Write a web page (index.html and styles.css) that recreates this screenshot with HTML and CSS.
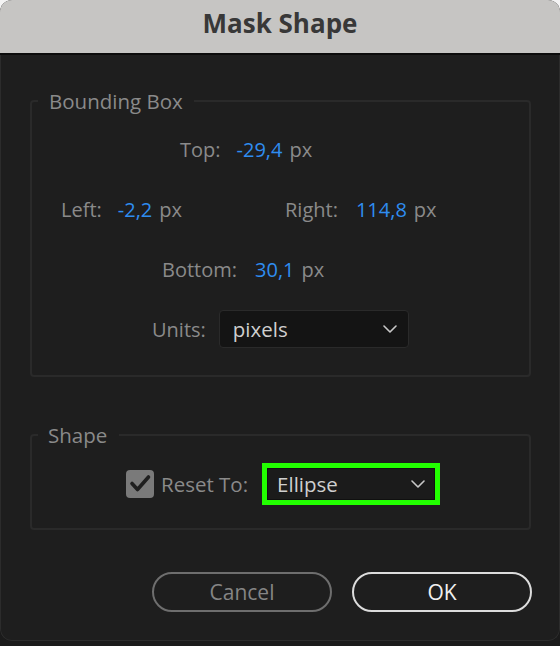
FILE: index.html
```html
<!DOCTYPE html>
<html lang="en">
<head>
<meta charset="utf-8">
<title>Mask Shape</title>
<link rel="stylesheet" href="styles.css">
</head>
<body>
<div class="window">
  <div class="titlebar">Mask Shape</div>
  <div class="content">
    <fieldset class="group bbox">
      <legend>Bounding Box</legend>
      <div class="row row-top">
        <span class="label">Top:</span>
        <span class="value">-29,4</span><span class="unit">px</span>
      </div>
      <div class="row row-lr">
        <div class="pair pair-left">
          <span class="label">Left:</span>
          <span class="value">-2,2</span><span class="unit">px</span>
        </div>
        <div class="pair pair-right">
          <span class="label">Right:</span>
          <span class="value">114,8</span><span class="unit">px</span>
        </div>
      </div>
      <div class="row row-bottom">
        <span class="label">Bottom:</span>
        <span class="value">30,1</span><span class="unit">px</span>
      </div>
      <div class="row row-units">
        <span class="label">Units:</span>
        <div class="select units-select">
          <span class="select-text">pixels</span>
          <svg class="chevron" width="14" height="8" viewBox="0 0 14 8"><polyline points="1,1 7,7 13,1" fill="none" stroke="#c8c8c8" stroke-width="1.6" stroke-linecap="round" stroke-linejoin="round"/></svg>
        </div>
      </div>
    </fieldset>

    <fieldset class="group shape">
      <legend>Shape</legend>
      <div class="row row-shape">
        <span class="checkbox">
          <svg width="28" height="28" viewBox="0 0 28 28"><polyline points="6,13.5 11.5,19.5 22.5,7" fill="none" stroke="#1f1f1f" stroke-width="3.6" stroke-linecap="round" stroke-linejoin="round"/></svg>
        </span>
        <span class="label reset-label">Reset To:</span>
        <div class="select shape-select">
          <span class="select-text">Ellipse</span>
          <svg class="chevron" width="14" height="8" viewBox="0 0 14 8"><polyline points="1,1 7,7 13,1" fill="none" stroke="#c8c8c8" stroke-width="1.6" stroke-linecap="round" stroke-linejoin="round"/></svg>
        </div>
      </div>
    </fieldset>

    <div class="buttons">
      <button class="btn btn-cancel">Cancel</button>
      <button class="btn btn-ok">OK</button>
    </div>
  </div>
</div>
</body>
</html>
```
FILE: styles.css
```css
html, body {
  margin: 0;
  padding: 0;
}
body {
  width: 560px;
  height: 646px;
  background: linear-gradient(to bottom, #f4f4f4 0, #f4f4f4 320px, #1b1b1b 320px, #1b1b1b 100%);
  font-family: "Open Sans", "Noto Sans", sans-serif;
  overflow: hidden;
}
.window {
  width: 560px;
  height: 641px;
  border-radius: 12px;
  overflow: hidden;
  background: #1e1e1e;
  display: flex;
  flex-direction: column;
}
.titlebar {
  height: 53px;
  background: #c6c5c3;
  border-bottom: 2px solid #0c0c0c;
  text-align: center;
  font-size: 26px;
  font-weight: 700;
  color: #383838;
  line-height: 47px;
}
.content {
  flex: 1;
  display: flex;
  flex-direction: column;
  border: 1px solid #2c2c2c;
  border-top: none;
  border-radius: 0 0 12px 12px;
}
.group {
  margin: 0 28px 0 29px;
  padding: 0;
  border: 2px solid #2a2a2a;
  border-radius: 4px;
  min-width: 0;
}
.group legend {
  margin-left: 6px;
  padding: 0 11px;
  font-size: 20.5px;
  line-height: 24px;
  color: #8a8a8a;
}
.bbox {
  margin-top: 34px;
  padding: 6px 0 16px;
}
.shape {
  margin-top: 46px;
  padding: 16px 0 23px;
}
.shape legend {
  padding: 0 12px 0 10px;
}
.row {
  display: flex;
  align-items: center;
  height: 60px;
  font-size: 20px;
  color: #8a8a8a;
  white-space: nowrap;
}
.label {
  color: #8a8a8a;
  margin-right: 16px;
}
.value {
  color: #2f8df0;
}
.unit {
  margin-left: 7px;
  color: #8a8a8a;
}
.row-top { padding-left: 148px; }
.row-lr {
  padding-left: 29px;
  display: grid;
  grid-template-columns: 224px auto;
  align-items: center;
}
.row-lr .pair {
  display: flex;
  align-items: center;
}
.pair-left .label { margin-right: 16px; }
.pair-right .label { margin-right: 18px; }
.row-bottom { padding-left: 130px; }
.row-bottom .label { margin-right: 18px; }
.row-units { padding-left: 120px; }
.row-units .label { margin-right: 13px; }

.select {
  display: flex;
  align-items: center;
  justify-content: space-between;
  box-sizing: border-box;
  color: #cfcfcf;
  font-size: 20.5px;
}
.units-select {
  width: 190px;
  height: 38px;
  background: #141414;
  border: 1px solid #2a2a2a;
  border-radius: 4px;
  padding: 0 11px 0 13px;
}
.row-shape {
  height: 42px;
  padding-left: 94px;
}
.checkbox {
  width: 28px;
  height: 28px;
  background: #7a7a7a;
  border-radius: 4px;
  display: flex;
  margin-right: 7px;
}
.reset-label {
  font-size: 20.5px;
  margin-right: 14px;
}
.shape-select {
  width: 178px;
  height: 42px;
  border: 5px solid #22ff00;
  background: #1b1b1b;
  box-shadow: inset 0 0 0 1px #101010;
  padding: 0 10px 0 10px;
}
.buttons {
  display: flex;
  justify-content: flex-end;
  gap: 20px;
  margin-top: 42px;
  padding-right: 27px;
}
.btn {
  width: 180px;
  height: 40px;
  border-radius: 20px;
  background: transparent;
  font-family: "Open Sans", "Noto Sans", sans-serif;
  font-size: 21px;
  padding: 0;
  line-height: 36px;
}
.btn-cancel {
  border: 2px solid #6e6e6e;
  color: #858585;
}
.btn-ok {
  border: 2px solid #dcdcdc;
  color: #f0f0f0;
}
```
